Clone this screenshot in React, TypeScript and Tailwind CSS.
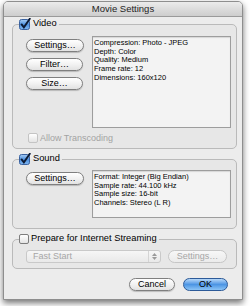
import React from "react";

// Mac OS X "Movie Settings" sheet

const VIDEO_INFO = [
  "Compression: Photo - JPEG",
  "Depth: Color",
  "Quality: Medium",
  "Frame rate: 12",
  "Dimensions: 160x120",
];

const SOUND_INFO = [
  "Format: Integer (Big Endian)",
  "Sample rate: 44.100 kHz",
  "Sample size: 16-bit",
  "Channels: Stereo (L R)",
];

function Check({ id, checked, disabled }: { id: string; checked?: boolean; disabled?: boolean }) {
  if (!checked) {
    return (
      <span
        className={`inline-block w-[10px] h-[10px] rounded-[2px] border bg-gradient-to-b from-white to-[#e4e4e4] ${
          disabled ? "border-[#c4c4c4]" : "border-[#7d7d7d]"
        }`}
      />
    );
  }
  return (
    <svg width="12" height="12" viewBox="0 0 12 12" className="block">
      <defs>
        <linearGradient id={id} x1="0" y1="0" x2="0" y2="1">
          <stop offset="0" stopColor="#a9cdf3" />
          <stop offset="0.5" stopColor="#4f92e0" />
          <stop offset="1" stopColor="#7fb6f0" />
        </linearGradient>
      </defs>
      <rect x="0.5" y="1.5" width="10" height="10" rx="2" fill={`url(#${id})`} stroke="#3a62a0" />
      <path d="M2.6 6.4 L4.9 9.4 L10.8 0.8" stroke="#0d1a33" strokeWidth="1.9" fill="none" strokeLinecap="round" />
    </svg>
  );
}

function AquaButton({
  label,
  w,
  primary,
  disabled,
}: {
  label: string;
  w: string;
  primary?: boolean;
  disabled?: boolean;
}) {
  const look = primary
    ? "border-[#2c5a98] bg-gradient-to-b from-[#b7d8f8] via-[#4c95e4] to-[#8cc4f6] text-black"
    : disabled
    ? "border-[#c6c6c6] bg-gradient-to-b from-[#f7f7f7] to-[#ebebeb] text-[#a6a6a6]"
    : "border-[#7f7f7f] bg-gradient-to-b from-white via-[#f2f2f2] to-[#e2e2e2] text-black shadow-[0_1px_1px_rgba(0,0,0,0.2)]";
  return (
    <div className={`${w} h-[13px] rounded-full border flex items-center justify-center text-[9px] leading-none ${look}`}>
      {label}
    </div>
  );
}

function InfoBox({ lines, h }: { lines: string[]; h: string }) {
  return (
    <div className={`flex-1 ${h} border border-[#9d9d9d] bg-[#f3f3f3] px-[1px] pt-[2px] shadow-[inset_0_1px_1px_rgba(0,0,0,0.12)]`}>
      {lines.map((l) => (
        <div key={l} className="text-[7.5px] leading-[8.7px] text-black whitespace-nowrap">
          {l}
        </div>
      ))}
    </div>
  );
}

function GroupLegend({ id, label, checked }: { id: string; label: string; checked?: boolean }) {
  return (
    <legend className="ml-[6px] pr-[2px]">
      <span className="flex items-center h-[12px] gap-[1px]">
        <Check id={id} checked={checked} />
        <span className="text-[9.3px] leading-none text-black ml-[1px]">{label}</span>
      </span>
    </legend>
  );
}

export default function App() {
  return (
    <div className="w-[250px] h-[306px] bg-white pl-[3px] pt-[1px] font-['Liberation_Sans',Arial,sans-serif]">
      <div className="w-[240px] rounded-t-[5px] border border-[#8e8e8e] bg-[#ececec] shadow-[0_3px_6px_rgba(0,0,0,0.55)]">
        {/* title bar */}
        <div className="h-[15px] rounded-t-[4px] border-b border-[#9a9a9a] bg-gradient-to-b from-[#ebebeb] to-[#cdcdcd] flex items-center justify-center">
          <span className="text-[9.5px] leading-none text-[#1e1e1e]">Movie Settings</span>
        </div>

        {/* Video */}
        <fieldset className="mt-[1px] ml-[8px] mr-[5px] rounded-[5px] border border-[#bababa] bg-[#e7e7e7]">
          <GroupLegend id="chk-video" label="Video" checked />
          <div className="flex items-start pl-[13px] pr-[5px] pt-[6px]">
            <div className="flex flex-col gap-[6px] mt-[3px] w-[57px]">
              <AquaButton label="Settings…" w="w-[58px]" />
              <AquaButton label="Filter…" w="w-[57px]" />
              <AquaButton label="Size…" w="w-[57px]" />
            </div>
            <div className="ml-[9px] flex-1 flex">
              <InfoBox lines={VIDEO_INFO} h="h-[92px]" />
            </div>
          </div>
          <div className="flex items-center pl-[15px] mt-[5px] mb-[5px] gap-[2px]">
            <Check id="chk-trans" disabled />
            <span className="text-[9px] leading-none text-[#a3a3a3]">Allow Transcoding</span>
          </div>
        </fieldset>

        {/* Sound */}
        <fieldset className="mt-[4px] ml-[8px] mr-[5px] rounded-[5px] border border-[#bababa] bg-[#e7e7e7]">
          <GroupLegend id="chk-sound" label="Sound" checked />
          <div className="flex items-start pl-[13px] pr-[5px] pt-[5px] pb-[10px]">
            <div className="mt-[2px] w-[57px]">
              <AquaButton label="Settings…" w="w-[58px]" />
            </div>
            <div className="ml-[9px] flex-1 flex">
              <InfoBox lines={SOUND_INFO} h="h-[48px]" />
            </div>
          </div>
        </fieldset>

        {/* Streaming */}
        <fieldset className="mt-[4px] ml-[8px] mr-[5px] rounded-[5px] border border-[#bababa] bg-[#e7e7e7]">
          <GroupLegend id="chk-stream" label="Prepare for Internet Streaming" />
          <div className="flex items-center pl-[13px] pt-[5px] pb-[5px] gap-[7px]">
            <div className="w-[135px] h-[13px] rounded-[3px] border border-[#c9c9c9] bg-gradient-to-b from-[#f6f6f6] to-[#e9e9e9] flex items-center">
              <span className="flex-1 pl-[6px] text-[9px] leading-none text-[#a6a6a6]">Fast Start</span>
              <span className="w-[12px] h-full border-l border-[#d4d4d4] flex flex-col items-center justify-center gap-[1px]">
                <svg width="5" height="3" viewBox="0 0 5 3"><path d="M0 3 L2.5 0 L5 3Z" fill="#9a9a9a" /></svg>
                <svg width="5" height="3" viewBox="0 0 5 3"><path d="M0 0 L2.5 3 L5 0Z" fill="#9a9a9a" /></svg>
              </span>
            </div>
            <AquaButton label="Settings…" w="w-[59px]" disabled />
          </div>
        </fieldset>

        {/* buttons */}
        <div className="flex justify-end gap-[8px] mt-[9px] mr-[14px] pb-[8px]">
          <AquaButton label="Cancel" w="w-[46px]" />
          <AquaButton label="OK" w="w-[45px]" primary />
        </div>
      </div>
    </div>
  );
}
